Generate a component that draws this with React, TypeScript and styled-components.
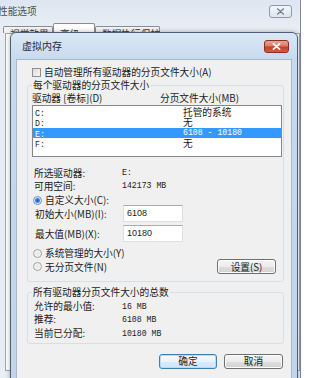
import styled, { createGlobalStyle } from "styled-components";

const GlobalStyle = createGlobalStyle`
  html, body {
    margin: 0;
    padding: 0;
    background: #ffffff;
    overflow: hidden;
  }
  body {
    font-family: "Noto Sans CJK SC", "Noto Sans", sans-serif;
    font-size: 9.7px;
    color: #1b1b1b;
  }
`;

const Desktop = styled.div`
  position: relative;
  width: 310px;
  height: 378px;
  overflow: hidden;
  background: #ffffff;
`;

/* ---------- window behind: 性能选项 ---------- */

const OuterWindow = styled.div`
  width: 301px;
  height: 378px;
  box-sizing: border-box;
  border-right: 1px solid #7b8aa0;
  background: linear-gradient(#dde6f1, #e8eef5 30px);
  display: flex;
  flex-direction: column;
`;

const OuterTitleBar = styled.div`
  height: 22px;
  display: flex;
  align-items: center;
  justify-content: space-between;
  padding-right: 8px;
`;

const OuterTitle = styled.span`
  margin-left: -2px;
  color: #4a4f57;
  font-size: 9.7px;
  line-height: 12px;
`;

const GrayClose = styled.div`
  width: 23px;
  height: 13px;
  box-sizing: border-box;
  border: 1px solid #8d99aa;
  border-radius: 3px;
  background: linear-gradient(#f3f6fa, #dfe6ef);
  display: flex;
  align-items: center;
  justify-content: center;
`;

const TabStrip = styled.div`
  height: 11px;
  overflow: hidden;
  display: flex;
  align-items: flex-start;
  padding-left: 3px;
`;

const Tab = styled.div<{ $active?: boolean; $w: number }>`
  width: ${(p) => p.$w}px;
  margin-top: ${(p) => (p.$active ? 1 : 4)}px;
  padding-top: ${(p) => (p.$active ? 5 : 2)}px;
  height: 20px;
  box-sizing: border-box;
  border: 1px solid #898c95;
  border-bottom: none;
  border-radius: 2px 2px 0 0;
  background: ${(p) => (p.$active ? "#ffffff" : "linear-gradient(#f5f5f5, #e4e4e4)")};
  padding-left: 6px;
  line-height: 10px;
  white-space: nowrap;
  color: #333;
`;

const TabPage = styled.div`
  flex: 1;
  margin: 0 0 7px 5px;
  background: #ffffff;
  border: 1px solid #a0a4ab;
`;

/* ---------- dialog: 虚拟内存 ---------- */

const Dialog = styled.div`
  position: absolute;
  left: 10px;
  top: 32px;
  width: 288px;
  height: 352px;
  box-sizing: border-box;
  border: 1px solid #4f5f73;
  border-radius: 6px 6px 0 0;
  background: linear-gradient(180deg, #dbe7f4 0%, #c6d9ee 28px, #c0d5eb 100%);
  box-shadow: 0 0 5px rgba(0, 0, 0, 0.3);
  padding: 0 5px;
  display: flex;
  flex-direction: column;
`;

const DialogTitleBar = styled.div`
  height: 26px;
  flex: none;
  display: flex;
  align-items: center;
  justify-content: space-between;
  padding: 0 3px 0 6px;
`;

const DialogTitle = styled.span`
  font-size: 10px;
  line-height: 12px;
  color: #1e2a3a;
`;

const RedClose = styled.div`
  width: 25px;
  height: 13px;
  box-sizing: border-box;
  border: 1px solid #8a2f22;
  border-radius: 3px;
  background: linear-gradient(#eaa597 0%, #dc7a66 45%, #c7402a 55%, #d55a40 100%);
  display: flex;
  align-items: center;
  justify-content: center;
`;

const Content = styled.div`
  flex: 1;
  background: #f0f0f0;
  border: 1px solid #a9b9cc;
  border-bottom: none;
  display: flex;
  flex-direction: column;
`;

const CheckRow = styled.div`
  margin-top: 7px;
  height: 10px;
  padding-left: 15px;
  display: flex;
  align-items: center;
  gap: 3px;
  line-height: 10px;
`;

const CheckBox = styled.span`
  width: 9px;
  height: 9px;
  box-sizing: border-box;
  border: 1px solid #8f8f8f;
  background: linear-gradient(135deg, #dcdcdc, #f7f7f7);
`;

const Group = styled.fieldset<{ $top: number }>`
  margin: ${(p) => p.$top}px 7px 0 10px;
  padding: 0 2px 0 4px;
  border: 1px solid #d5dfe5;
  border-radius: 3px;
  min-width: 0;
`;

const Legend = styled.legend`
  padding: 0 1px;
  line-height: 10px;
  height: 10px;
`;

const HeaderRow = styled.div`
  margin-top: 3px;
  height: 10px;
  line-height: 10px;
  display: flex;
`;

const HeaderCell = styled.span<{ $w?: number }>`
  width: ${(p) => (p.$w ? `${p.$w}px` : "auto")};
  white-space: nowrap;
`;

const DriveList = styled.div`
  margin-top: 2px;
  width: 250px;
  height: 52px;
  box-sizing: border-box;
  border: 1px solid #828790;
  background: #ffffff;
  padding-top: 0.5px;
`;

const DriveRow = styled.div<{ $selected?: boolean }>`
  height: 10.6px;
  line-height: 10.6px;
  display: flex;
  padding-left: 2px;
  background: ${(p) => (p.$selected ? "#3399ff" : "transparent")};
  color: ${(p) => (p.$selected ? "#ffffff" : "#1b1b1b")};
`;

const DriveName = styled.span`
  width: 148px;
`;

const Mono = styled.span`
  font-family: "Liberation Mono", monospace;
  font-size: 8.2px;
`;

const InfoRow = styled.div<{ $top: number }>`
  margin-top: ${(p) => p.$top}px;
  height: 12px;
  line-height: 12px;
  padding-left: 2px;
  display: flex;
  align-items: center;
`;

const Label = styled.span`
  width: 88px;
  flex: none;
  white-space: nowrap;
`;

const RadioRow = styled.div<{ $top: number; $h?: number }>`
  margin-top: ${(p) => p.$top}px;
  height: ${(p) => p.$h ?? 10}px;
  padding-left: 1px;
  display: flex;
  align-items: center;
  gap: 3px;
  line-height: 10px;
`;

const Radio = styled.span<{ $on?: boolean }>`
  width: 9px;
  height: 9px;
  flex: none;
  box-sizing: border-box;
  border-radius: 50%;
  border: 1px solid ${(p) => (p.$on ? "#6c8fbf" : "#a2a2a2")};
  background: ${(p) =>
    p.$on
      ? "radial-gradient(circle, #1f5fc4 0, #3b83e0 2px, #dfe9f7 3px, #f4f7fb 4px)"
      : "radial-gradient(circle, #e6e6e6 0, #f6f6f6 4px)"};
`;

const FieldRow = styled.div<{ $top: number }>`
  margin-top: ${(p) => p.$top}px;
  height: 17px;
  padding-left: 3px;
  display: flex;
  align-items: center;
  line-height: 10px;
`;

const Field = styled.div`
  width: 60px;
  height: 17px;
  box-sizing: border-box;
  border: 1px solid #dbdfe6;
  border-top-color: #abadb3;
  background: #ffffff;
  padding-left: 3px;
  font-family: "Liberation Sans", sans-serif;
  font-size: 9px;
  line-height: 15px;
`;

const LastRadioRow = styled(RadioRow)`
  justify-content: space-between;
  padding-right: 5px;
`;

const RadioLabel = styled.span`
  display: flex;
  align-items: center;
  gap: 3px;
`;

const Button = styled.div<{ $default?: boolean }>`
  width: ${(p) => (p.$default ? 58 : 59)}px;
  height: 15px;
  box-sizing: border-box;
  border: 1px solid ${(p) => (p.$default ? "#3c7fb1" : "#707070")};
  border-radius: 3px;
  background: ${(p) =>
    p.$default
      ? "linear-gradient(#f6fbfe 0%, #e8f3fc 50%, #d9ebf9 51%, #cfe5f7 100%)"
      : "linear-gradient(#f4f4f4 0%, #ececec 50%, #dedede 51%, #d2d2d2 100%)"};
  box-shadow: ${(p) => (p.$default ? "inset 0 0 0 1px #b9dcf5" : "inset 0 0 0 1px #fcfcfc")};
  display: flex;
  align-items: center;
  justify-content: center;
  line-height: 10px;
  font-size: 9.7px;
`;

const TotalRow = styled.div<{ $first?: boolean }>`
  margin-top: ${(p) => (p.$first ? 2.5 : 0.5)}px;
  height: 13px;
  line-height: 13px;
  padding-left: 2px;
  display: flex;
  align-items: center;
`;

const ButtonBar = styled.div`
  margin-top: 10px;
  padding-right: 8px;
  display: flex;
  justify-content: flex-end;
  gap: 7px;
`;

const CloseX = ({ color, w }: { color: string; w: number }) => (
  <svg width="9" height="7" viewBox="0 0 9 7">
    <path d="M1.5 0.8 L7.5 6.2 M7.5 0.8 L1.5 6.2" stroke={color} strokeWidth={w} strokeLinecap="round" />
  </svg>
);

const drives = [
  { name: "C:", size: "托管的系统" },
  { name: "D:", size: "无" },
  { name: "E:", size: "6108 - 10180", selected: true },
  { name: "F:", size: "无" },
];

const App = () => {
  return (
    <Desktop>
      <GlobalStyle />
      <OuterWindow>
        <OuterTitleBar>
          <OuterTitle>性能选项</OuterTitle>
          <GrayClose>
            <CloseX color="#6f7c8e" w={1.2} />
          </GrayClose>
        </OuterTitleBar>
        <TabStrip>
          <Tab $w={50}>视觉效果</Tab>
          <Tab $w={42} $active>
            高级
          </Tab>
          <Tab $w={65}>数据执行保护</Tab>
        </TabStrip>
        <TabPage />
      </OuterWindow>

      <Dialog>
        <DialogTitleBar>
          <DialogTitle>虚拟内存</DialogTitle>
          <RedClose>
            <CloseX color="#ffffff" w={1.8} />
          </RedClose>
        </DialogTitleBar>
        <Content>
          <CheckRow>
            <CheckBox />
            <span>自动管理所有驱动器的分页文件大小(A)</span>
          </CheckRow>

          <Group $top={3} style={{ paddingBottom: 7 }}>
            <Legend>每个驱动器的分页文件大小</Legend>
            <HeaderRow>
              <HeaderCell $w={128}>驱动器 [卷标](D)</HeaderCell>
              <HeaderCell>分页文件大小(MB)</HeaderCell>
            </HeaderRow>
            <DriveList>
              {drives.map((d) => (
                <DriveRow key={d.name} $selected={d.selected}>
                  <DriveName>
                    <Mono>{d.name}</Mono>
                  </DriveName>
                  {/^[0-9]/.test(d.size) ? <Mono>{d.size}</Mono> : <span>{d.size}</span>}
                </DriveRow>
              ))}
            </DriveList>

            <InfoRow $top={10}>
              <Label>所选驱动器:</Label>
              <Mono>E:</Mono>
            </InfoRow>
            <InfoRow $top={1}>
              <Label>可用空间:</Label>
              <Mono>142173 MB</Mono>
            </InfoRow>

            <RadioRow $top={3}>
              <Radio $on />
              <span>自定义大小(C):</span>
            </RadioRow>
            <FieldRow $top={0}>
              <Label>初始大小(MB)(I):</Label>
              <Field>6108</Field>
            </FieldRow>
            <FieldRow $top={3}>
              <Label>最大值(MB)(X):</Label>
              <Field>10180</Field>
            </FieldRow>

            <RadioRow $top={6}>
              <Radio />
              <span>系统管理的大小(Y)</span>
            </RadioRow>
            <LastRadioRow $top={1} $h={15}>
              <RadioLabel>
                <Radio />
                <span>无分页文件(N)</span>
              </RadioLabel>
              <Button>设置(S)</Button>
            </LastRadioRow>
          </Group>

          <Group $top={5} style={{ paddingBottom: 3 }}>
            <Legend>所有驱动器分页文件大小的总数</Legend>
            <TotalRow $first>
              <Label>允许的最小值:</Label>
              <Mono>16 MB</Mono>
            </TotalRow>
            <TotalRow>
              <Label>推荐:</Label>
              <Mono>6108 MB</Mono>
            </TotalRow>
            <TotalRow>
              <Label>当前已分配:</Label>
              <Mono>10180 MB</Mono>
            </TotalRow>
          </Group>

          <ButtonBar>
            <Button $default>确定</Button>
            <Button>取消</Button>
          </ButtonBar>
        </Content>
      </Dialog>
    </Desktop>
  );
};

export default App;
